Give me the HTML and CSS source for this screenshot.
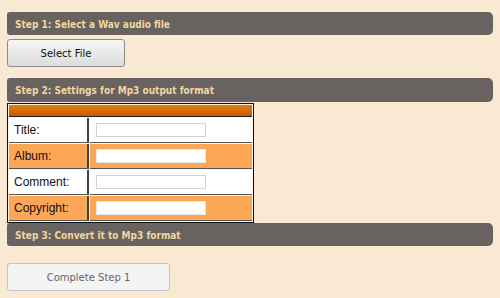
FILE: index.html
```html
<!DOCTYPE html>
<html lang="en">
<head>
  <meta charset="UTF-8" />
  <title>Wav to Mp3</title>
  <link rel="stylesheet" href="styles.css">
</head>
<body>
  <div class="stepHeader">Step 1: Select a Wav audio file</div>
  <button class="selectBtn">Select File</button>

  <div class="stepHeader step2">Step 2: Settings for Mp3 output format</div>
  <table class="tagTable">
    <tr><td colspan="2" class="tableHead"></td></tr>
    <tr class="plain">
      <td class="label">Title:</td>
      <td class="field"><input type="text" class="dim" /></td>
    </tr>
    <tr class="orange">
      <td class="label">Album:</td>
      <td class="field"><input type="text" /></td>
    </tr>
    <tr class="plain">
      <td class="label">Comment:</td>
      <td class="field"><input type="text" class="dim" /></td>
    </tr>
    <tr class="orange">
      <td class="label">Copyright:</td>
      <td class="field"><input type="text" /></td>
    </tr>
  </table>

  <div class="stepHeader step3">Step 3: Convert it to Mp3 format</div>
  <button class="convertBtn">Complete Step 1</button>
</body>
</html>
```

FILE: styles.css
```css
body {
  margin: 0;
  padding: 12px 7px 0 7px;
  background-color: #fae9d2;
  font-family: 'Liberation Sans', Arial, sans-serif;
}
.stepHeader {
  width: 478px;
  height: 23px;
  line-height: 25px;
  padding-left: 8px;
  background-color: #686360;
  color: #f1d6a2;
  font-family: 'DejaVu Sans Condensed', 'DejaVu Sans', Verdana, sans-serif;
  font-weight: bold;
  font-size: 10px;
  border-radius: 3px 5px 5px 3px;
}
.selectBtn {
  display: block;
  margin-top: 4px;
  width: 118px;
  height: 28px;
  font-family: 'DejaVu Sans', Tahoma, sans-serif;
  font-size: 10px;
  color: #111;
  background: linear-gradient(#f6f6f6, #dcdcdc);
  border: 1px solid #8c8c8c;
  border-radius: 3px;
  padding: 0;
}
.step2 {
  margin-top: 11px;
  height: 24px;
}
.tagTable {
  margin-top: 1px;
  width: 247px;
  border-collapse: separate;
  border-spacing: 1px;
  border: 1px solid #111;
  background-color: #fdf4e6;
  font-size: 12px;
}
.tagTable td {
  padding: 0;
}
.tableHead {
  height: 11px;
  background: linear-gradient(#e57a12, #c75c00);
  border-bottom: 1px solid #222;
}
.label {
  width: 73px;
  height: 24px;
  padding-left: 5px !important;
  border-right: 2px solid #444;
  border-bottom: 1px solid #555;
  color: #111;
}
.field {
  border-bottom: 1px solid #555;
  padding-left: 6px !important;
}
.plain td {
  background-color: #ffffff;
}
.orange td {
  background-color: #fca756;
}
.field input {
  display: block;
  width: 104px;
  height: 10px;
  margin: 0;
  padding: 1px 2px;
  border: 1px solid #e6e6e6;
  background: #fff;
}
.field input.dim {
  border-color: #d2d2d2;
}
.step3 {
  margin-top: 0;
}
.convertBtn {
  display: block;
  margin-top: 17px;
  width: 163px;
  height: 28px;
  font-family: 'DejaVu Sans', Verdana, sans-serif;
  font-size: 10px;
  color: #666;
  background-color: #f4f4f4;
  border: 1px solid #c4c4c4;
  border-radius: 3px;
  padding: 0;
}
```
